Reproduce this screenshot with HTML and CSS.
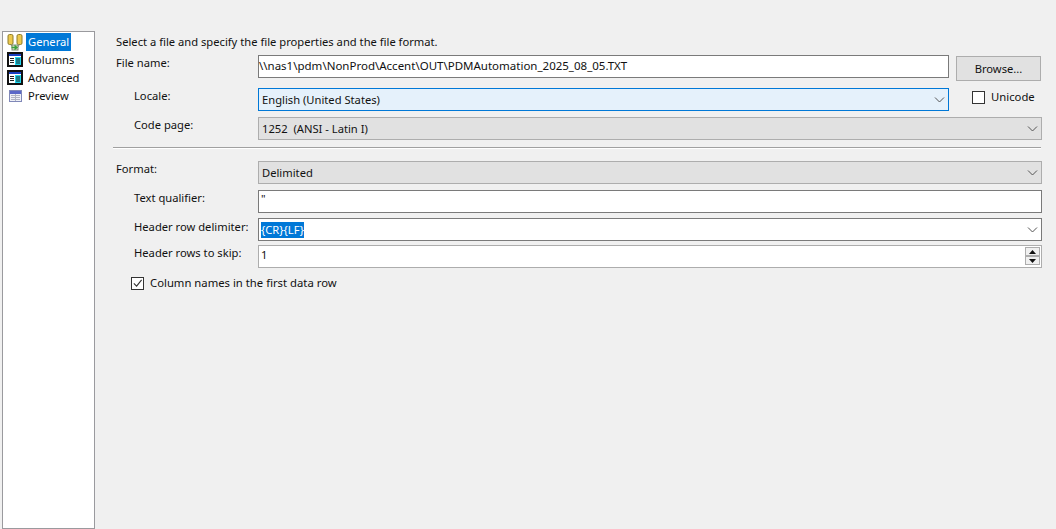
FILE: index.html
```
<!DOCTYPE html>
<html lang="en">
<head>
<meta charset="utf-8">
<title>Flat File Source</title>
<link rel="stylesheet" href="styles.css">
</head>
<body>
<div class="page">
  <nav class="side">
    <div class="nav-item">
      <svg class="ico" width="18" height="18" viewBox="0 0 18 18">
        <rect x="2" y="1.5" width="5" height="10" rx="1.5" fill="#ecc94e" stroke="#8f7d28"/>
        <rect x="11" y="1.5" width="5" height="10" rx="1.5" fill="#ecc94e" stroke="#8f7d28"/>
        <path d="M4.5 11.5 L7.5 15 M13.5 11.5 L11 15" stroke="#8a8a6a" fill="none"/>
        <rect x="6" y="12" width="6" height="5" fill="#dfe6cf" stroke="#7d8a70"/>
        <path d="M5.5 14.5h5M8.5 12.5l2.5 2-2.5 2" stroke="#3aa03a" stroke-width="1.4" fill="none"/>
      </svg>
      <span class="nav-text sel">General</span>
    </div>
    <div class="nav-item">
      <svg class="ico" width="18" height="18" viewBox="0 0 18 18">
        <rect x="2" y="2" width="14" height="13" fill="#fff" stroke="#111" stroke-width="2"/>
        <rect x="3" y="3" width="12" height="2" fill="#1a3fc0"/>
        <rect x="9" y="6" width="6" height="8" fill="#1fd8f0"/>
        <path d="M4 7.5h4M4 9.5h4M4 11.5h4M10 8h4M10 10h4M10 12h4" stroke="#222"/>
      </svg>
      <span class="nav-text">Columns</span>
    </div>
    <div class="nav-item">
      <svg class="ico" width="18" height="18" viewBox="0 0 18 18">
        <rect x="2" y="2" width="14" height="13" fill="#fff" stroke="#111" stroke-width="2"/>
        <rect x="3" y="3" width="12" height="2" fill="#1a3fc0"/>
        <rect x="9" y="6" width="6" height="8" fill="#1fd8f0"/>
        <path d="M4 7.5h4M4 9.5h4M4 11.5h4M10 8h4M10 10h4M10 12h4" stroke="#222"/>
      </svg>
      <span class="nav-text">Advanced</span>
    </div>
    <div class="nav-item">
      <svg class="ico" width="18" height="18" viewBox="0 0 18 18">
        <rect x="3.5" y="3.5" width="12" height="11" fill="#eef0f6" stroke="#8088b8"/>
        <rect x="4" y="4" width="11" height="3" fill="#5a68c8"/>
        <path d="M5 8.5h9M5 10.5h9M5 12.5h9M9.500 7v7" stroke="#b0b4c4"/>
      </svg>
      <span class="nav-text">Preview</span>
    </div>
  </nav>
  <main class="main">
    <p class="intro">Select a file and specify the file properties and the file format.</p>
    <div class="row file-row">
      <span class="label">File name:</span>
      <div class="field wide input path">\\nas1\pdm\NonProd\Accent\OUT\PDMAutomation_2025_08_05.TXT</div>
      <div class="button">Browse...</div>
    </div>
    <div class="row locale-row">
      <span class="label sub">Locale:</span>
      <div class="field wide combo focus">English (United States)
        <svg class="chev" width="11" height="6" viewBox="0 0 11 6"><path d="M1 .5l4.500 4.500L10 .5" fill="none" stroke="#555"/></svg>
      </div>
      <label class="unicode"><span class="check"></span>Unicode</label>
    </div>
    <div class="row code-row">
      <span class="label sub">Code page:</span>
      <div class="field full combo disabled">1252&nbsp; (ANSI - Latin I)
        <svg class="chev" width="11" height="6" viewBox="0 0 11 6"><path d="M1 .5l4.500 4.500L10 .5" fill="none" stroke="#555"/></svg>
      </div>
    </div>
    <hr class="sep">
    <div class="row format-row">
      <span class="label">Format:</span>
      <div class="field full combo disabled">Delimited
        <svg class="chev" width="11" height="6" viewBox="0 0 11 6"><path d="M1 .5l4.500 4.500L10 .5" fill="none" stroke="#555"/></svg>
      </div>
    </div>
    <div class="row qual-row">
      <span class="label sub">Text qualifier:</span>
      <div class="field full input qual">"</div>
    </div>
    <div class="row delim-row">
      <span class="label sub">Header row delimiter:</span>
      <div class="field full combo white delim"><span class="selected">{CR}{LF}</span>
        <svg class="chev" width="11" height="6" viewBox="0 0 11 6"><path d="M1 .5l4.500 4.500L10 .5" fill="none" stroke="#555"/></svg>
      </div>
    </div>
    <div class="row skip-row">
      <span class="label sub">Header rows to skip:</span>
      <div class="field full spin">1
        <div class="spinner">
          <span class="spin-btn"><svg width="7" height="4" viewBox="0 0 7 4"><path d="M3.500 0L7 4H0z" fill="#111"/></svg></span>
          <span class="spin-btn"><svg width="7" height="4" viewBox="0 0 7 4"><path d="M0 0h7L3.500 4z" fill="#111"/></svg></span>
        </div>
      </div>
    </div>
    <label class="names">
      <span class="check"><svg width="12" height="12" viewBox="0 0 12 12"><path d="M2 6.500l3 3 5.500-7" fill="none" stroke="#333" stroke-width="1.2"/></svg></span>
      Column names in the first data row
    </label>
  </main>
</div>
</body>
</html>
```
FILE: styles.css
```
* { box-sizing: border-box; }
html, body { margin: 0; height: 100%; }
body {
  background: #f0f0f0;
  color: #111;
  font: 11.2px/14px "Noto Sans", "Open Sans", sans-serif;
  overflow: hidden;
}
.page { display: flex; padding: 31px 14px 0 2px; height: 529px; }
.side {
  width: 93px;
  height: 498px;
  flex: none;
  background: #fff;
  border: 1px solid #9a9a9e;
  padding-top: 1px;
}
.nav-item { display: flex; align-items: center; height: 18px; padding-left: 3px; gap: 2px; }
.ico { flex: none; }
.nav-text { padding: 0 2px; line-height: 18px; height: 18px; }
.sel { background: #0078d7; color: #fff; }
.main { width: 926px; margin-left: 21px; padding-top: 4px; }
.intro { margin: 0; height: 14px; }
.row { display: flex; align-items: flex-start; }
.label { width: 142px; flex: none; }
.sub { padding-left: 18px; }
.file-row { margin-top: 6px; }
.file-row .label { padding-top: 1px; }
.locale-row { margin-top: 7px; }
.locale-row .label { padding-top: 1px; }
.code-row { margin-top: 6px; }
.code-row .label { padding-top: 1px; }
.format-row { margin-top: 12px; }
.format-row .label { padding-top: 1px; }
.qual-row { margin-top: 6px; }
.qual-row .label { padding-top: 1px; }
.delim-row { margin-top: 5px; }
.delim-row .label { padding-top: 2px; }
.skip-row { margin-top: 4px; }
.skip-row .label { padding-top: 1px; }
.field {
  height: 23px;
  border: 1px solid #7a7a7a;
  padding: 4px 0 0 3px;
  white-space: nowrap;
  position: relative;
  background: #fff;
}
.path { font-size: 11.5px; padding: 3px 0 0 0; }
.qual { padding: 1px 0 0 2px; }
.delim { padding: 3px 0 0 2px; }
.wide { width: 691px; }
.full { width: 784px; }
.combo { padding-right: 20px; }
.focus { background: #e5f1fb; border-color: #0078d7; }
.disabled { background: #e1e1e1; border-color: #adadad; }
.spin { border-color: #adadad; padding: 2px 0 0 2px; }
.chev { position: absolute; right: 2px; top: 8px; margin-right: 1px; }
.selected { background: #0078d7; color: #fff; display: inline-block; height: 16px; line-height: 16px; }
.button {
  width: 85px;
  height: 25px;
  margin: 1px 0 0 7px;
  background: #e1e1e1;
  border: 1px solid #adadad;
  text-align: center;
  line-height: 23px;
}
.check {
  width: 13px;
  height: 13px;
  flex: none;
  background: #fff;
  border: 1px solid #333;
  display: flex;
  align-items: center;
  justify-content: center;
}
.unicode { display: flex; gap: 6px; align-items: center; margin: 2px 0 0 23px; font-size: 11.3px; }
.sep { margin: 7px 1px 0 -3px; height: 2px; border: 0; border-top: 1px solid #a0a0a0; border-bottom: 1px solid #fff; }
.spinner { position: absolute; right: 0; top: 0; display: flex; flex-direction: column; padding: 1px 1px 0 0; }
.spin-btn {
  width: 15px;
  height: 9px;
  background: #f0f0f0;
  border: 1px solid #adadad;
  display: flex;
  align-items: center;
  justify-content: center;
}
.names { display: flex; gap: 6px; align-items: center; margin: 8px 0 0 15px; font-size: 11.3px; }
```
